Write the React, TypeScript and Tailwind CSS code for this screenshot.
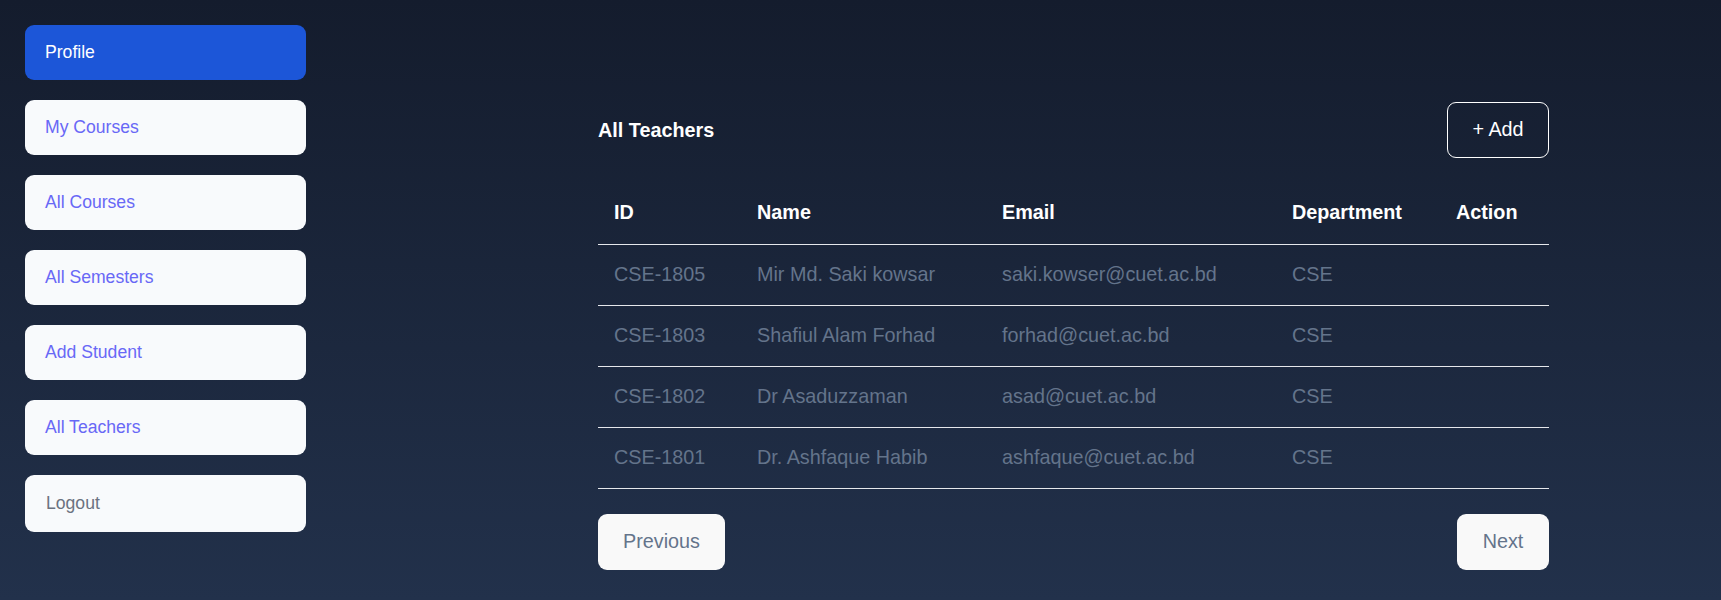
import React from "react";

const links = ["My Courses", "All Courses", "All Semesters", "Add Student", "All Teachers"];

const teachers = [
    { id: "CSE-1805", name: "Mir Md. Saki kowsar", email: "saki.kowser@cuet.ac.bd", dept: "CSE" },
    { id: "CSE-1803", name: "Shafiul Alam Forhad", email: "forhad@cuet.ac.bd", dept: "CSE" },
    { id: "CSE-1802", name: "Dr Asaduzzaman", email: "asad@cuet.ac.bd", dept: "CSE" },
    { id: "CSE-1801", name: "Dr. Ashfaque Habib", email: "ashfaque@cuet.ac.bd", dept: "CSE" },
];

function Sidebar() {
    return (
        <div className="flex flex-col gap-[20px] pt-[25px] pl-[25px] w-[306px] shrink-0">
            <div className="bg-[#1c56d8] text-white h-[55px] rounded-[9px] flex items-center pl-[20px] text-[17.6px]">
                Profile
            </div>
            {links.map((l) => (
                <div
                    key={l}
                    className="bg-[#f8fafc] text-[#6868f6] h-[55px] rounded-[9px] flex items-center pl-[20px] text-[17.6px]">
                    {l}
                </div>
            ))}
            <button className="bg-[#f8fafc] text-[#6b7280] h-[57px] rounded-[9px] flex items-center pl-[21px] text-[17.6px] text-left">
                Logout
            </button>
        </div>
    );
}

function App() {
    return (
        <div
            className="h-[600px] w-full flex bg-gradient-to-b from-[#141c2d] to-[#22314b] overflow-hidden"
            style={{ fontFamily: '"Liberation Sans", Arial, sans-serif' }}>
            <Sidebar />
            <div className="ml-[292px] w-[951px] pt-[102px] text-[19.8px]">
                <div className="flex items-center justify-between h-[56px]">
                    <h2 className="text-white font-bold pt-[2px]">All Teachers</h2>
                    <button className="border border-white text-white rounded-[9px] w-[102px] h-[56px]">
                        + Add
                    </button>
                </div>
                <table className="w-full table-fixed mt-[24px] border-collapse">
                    <colgroup>
                        <col className="w-[143px]" />
                        <col className="w-[245px]" />
                        <col className="w-[290px]" />
                        <col className="w-[164px]" />
                        <col />
                    </colgroup>
                    <thead>
                        <tr className="border-b border-[#e5e7eb] h-[62px]">
                            <th className="text-left text-white font-bold pl-[16px]">ID</th>
                            <th className="text-left text-white font-bold pl-[16px]">Name</th>
                            <th className="text-left text-white font-bold pl-[16px]">Email</th>
                            <th className="text-left text-white font-bold pl-[16px]">Department</th>
                            <th className="text-left text-white font-bold pl-[16px]">Action</th>
                        </tr>
                    </thead>
                    <tbody>
                        {teachers.map((t) => (
                            <tr key={t.id} className="border-b border-[#e5e7eb] h-[61px] text-[#64748b]">
                                <td className="pl-[16px]">{t.id}</td>
                                <td className="pl-[16px]">{t.name}</td>
                                <td className="pl-[16px]">{t.email}</td>
                                <td className="pl-[16px]">{t.dept}</td>
                                <td></td>
                            </tr>
                        ))}
                    </tbody>
                </table>
                <div className="flex justify-between mt-[25px]">
                    <button className="bg-[#f9f9f9] text-[#64748b] rounded-[9px] w-[127px] h-[56px]">
                        Previous
                    </button>
                    <button className="bg-[#f9f9f9] text-[#64748b] rounded-[9px] w-[92px] h-[56px]">
                        Next
                    </button>
                </div>
            </div>
        </div>
    );
}

export default App;
